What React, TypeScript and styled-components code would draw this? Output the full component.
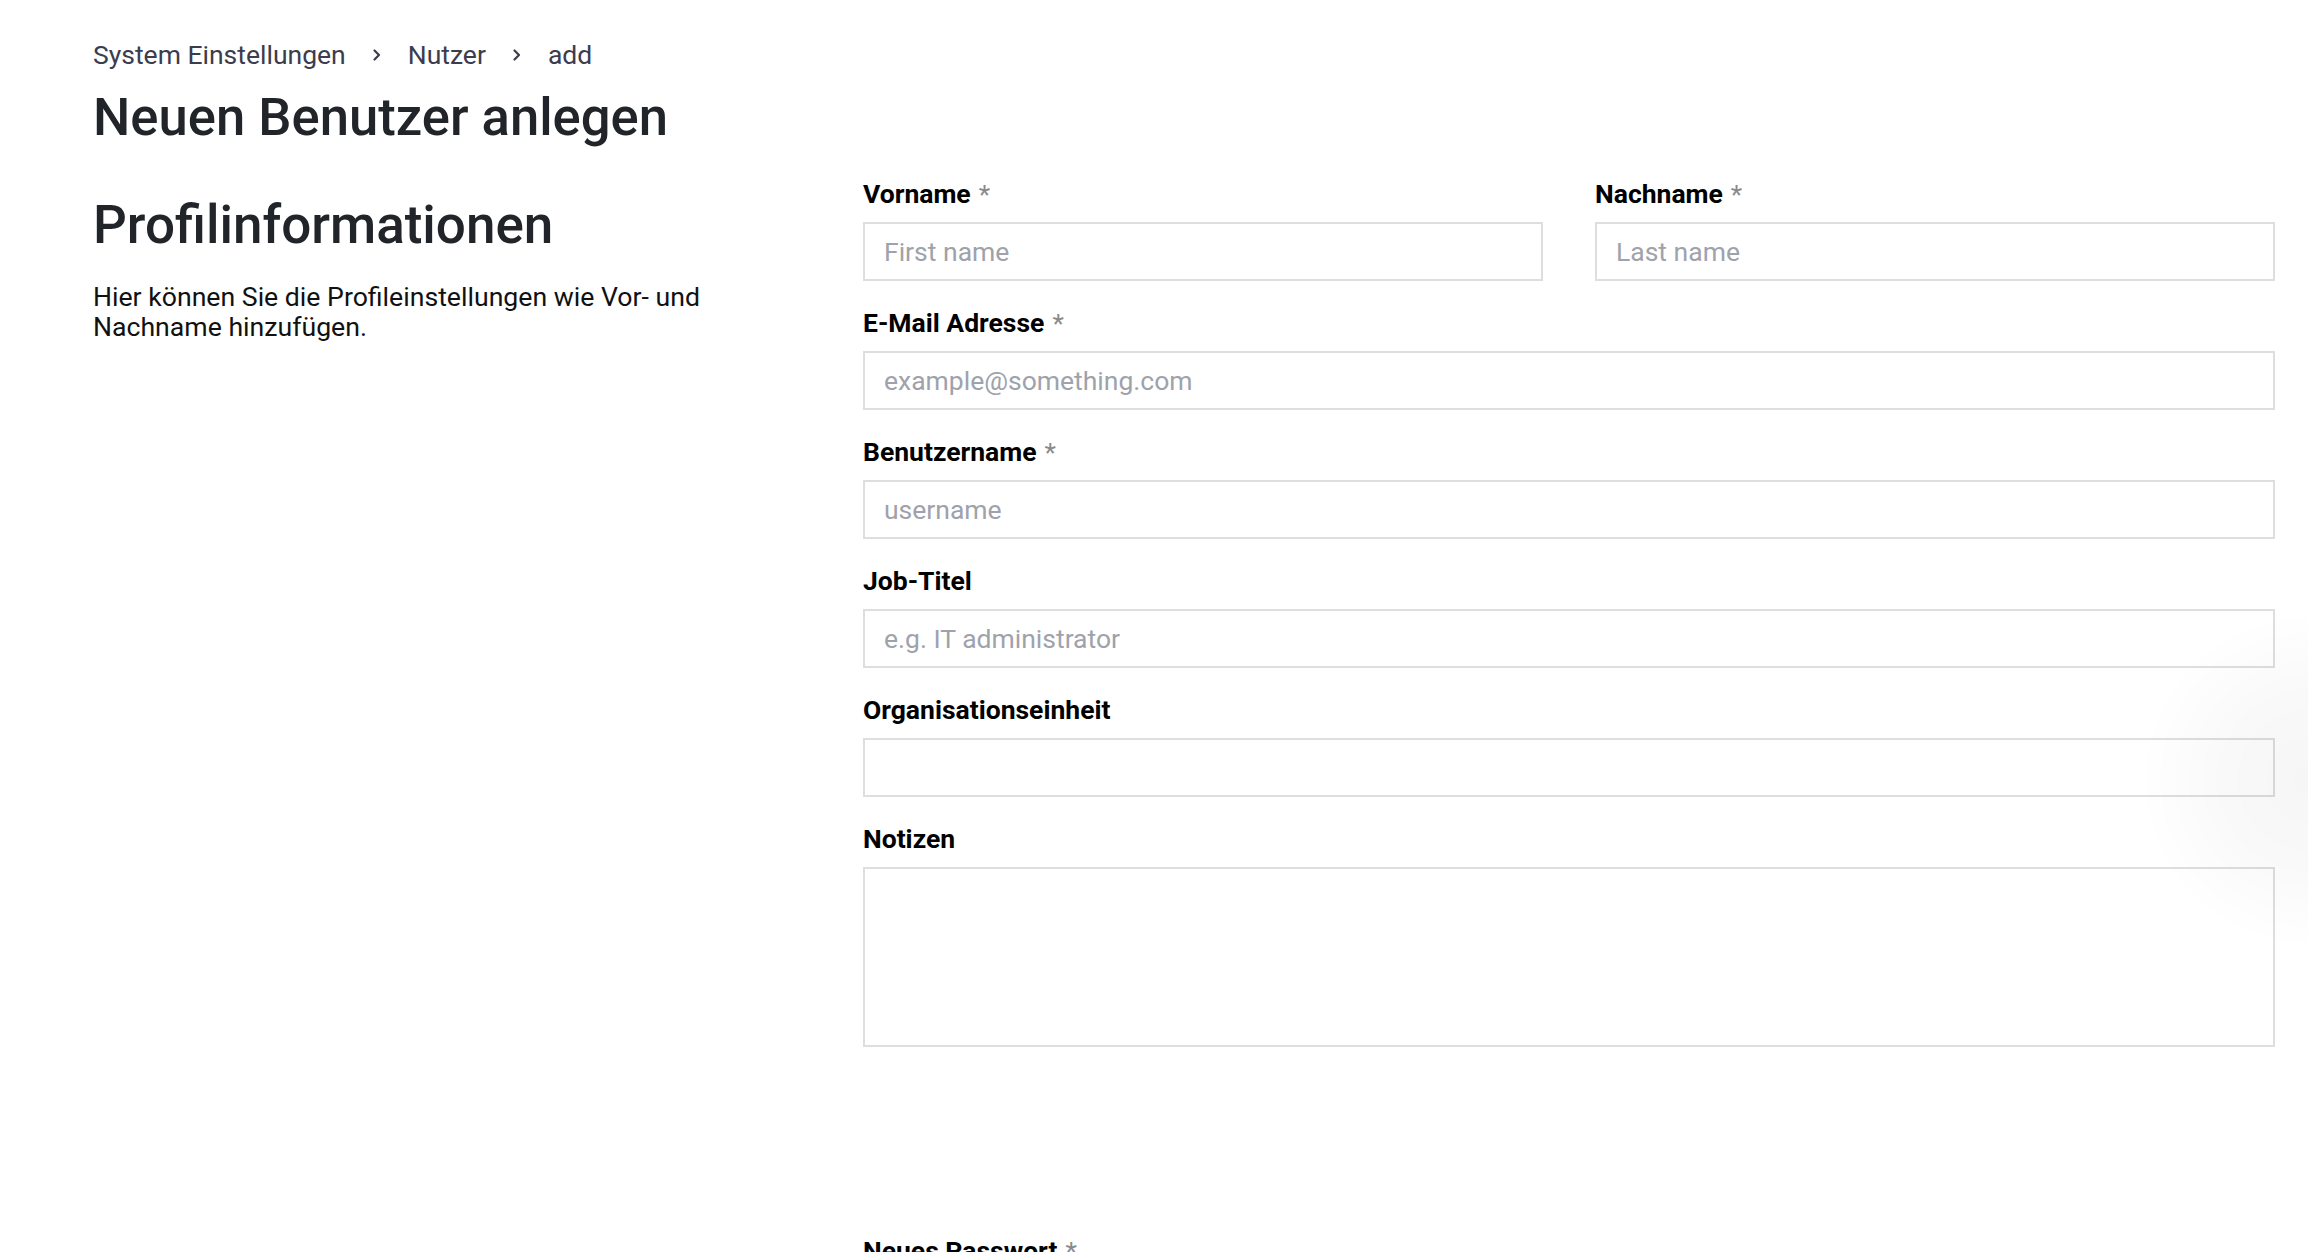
import React from "react";
import styled, { createGlobalStyle } from "styled-components";

const GlobalStyle = createGlobalStyle`
  html, body {
    margin: 0;
    padding: 0;
    background: #ffffff;
    font-family: Roboto, "Liberation Sans", Arial, sans-serif;
    overflow: hidden;
  }
  * { box-sizing: border-box; }
`;

const Page = styled.main`
  padding: 39px 33px 0 93px;
  min-height: 1252px;
  color: #212529;
`;

const Breadcrumb = styled.nav`
  display: flex;
  align-items: center;
  gap: 25px;
  font-size: 26.5px;
  line-height: 32px;
  color: #3b3c4e;
`;

const Crumb = styled.span`
  white-space: nowrap;
`;

const Chevron = styled.svg`
  width: 12px;
  height: 14px;
  flex: none;
`;

const Title = styled.h1`
  margin: 15px 0 0;
  font-size: 52.6px;
  line-height: 62px;
  font-weight: 500;
  color: #212529;
`;

const Section = styled.section<{ $top: number }>`
  display: grid;
  grid-template-columns: 700px 1fr;
  column-gap: 70px;
  margin-top: ${(p) => p.$top}px;
`;

const Intro = styled.div`
  padding-top: 16px;
`;

const SectionTitle = styled.h2`
  margin: 0;
  font-size: 53px;
  line-height: 62px;
  font-weight: 500;
  color: #212529;
`;

const Description = styled.p`
  margin: 26px 0 0;
  font-size: 26.65px;
  line-height: 30px;
  color: #111111;
  max-width: 660px;
`;

const Fields = styled.div`
  display: grid;
  grid-template-columns: 1fr 1fr;
  column-gap: 52px;
  row-gap: 26px;
`;

const Field = styled.div<{ $span?: boolean }>`
  display: flex;
  flex-direction: column;
  grid-column: ${(p) => (p.$span ? "1 / -1" : "auto")};
`;

const Label = styled.label`
  font-size: 26.5px;
  line-height: 32px;
  font-weight: 700;
  color: #000000;
  margin-bottom: 12px;
`;

const Required = styled.span`
  color: #8a8a8a;
  font-weight: 400;
  margin-left: 8px;
`;

const Input = styled.input`
  height: 59px;
  width: 100%;
  border: 2px solid #dedede;
  border-radius: 0;
  padding: 0 19px;
  font-family: Roboto, "Liberation Sans", Arial, sans-serif;
  font-size: 26.5px;
  color: #212529;
  background: #ffffff;
  outline: none;
  &::placeholder {
    color: #9ea2ab;
  }
`;

const TextArea = styled.textarea`
  height: 180px;
  width: 100%;
  border: 2px solid #dedede;
  border-radius: 0;
  padding: 14px 19px;
  font-family: Roboto, "Liberation Sans", Arial, sans-serif;
  font-size: 26.5px;
  resize: none;
  outline: none;
  background: #ffffff;
`;

const FloatingGlow = styled.div`
  position: fixed;
  right: -170px;
  top: 610px;
  width: 340px;
  height: 340px;
  border-radius: 50%;
  background: radial-gradient(circle at center, rgba(0, 0, 0, 0.035) 0%, rgba(0, 0, 0, 0.022) 35%, rgba(0, 0, 0, 0) 70%);
  pointer-events: none;
`;

const ChevronIcon = () => (
  <Chevron viewBox="0 0 12 14" fill="none">
    <path d="M3.5 2.5 L8 7 L3.5 11.5" stroke="#3b3c4e" strokeWidth="2.2" strokeLinecap="round" strokeLinejoin="round" />
  </Chevron>
);

type FieldDef = {
  label: string;
  placeholder?: string;
  required?: boolean;
  span?: boolean;
  type?: string;
};

const fields: FieldDef[] = [
  { label: "Vorname", placeholder: "First name", required: true },
  { label: "Nachname", placeholder: "Last name", required: true },
  { label: "E-Mail Adresse", placeholder: "example@something.com", required: true, span: true, type: "email" },
  { label: "Benutzername", placeholder: "username", required: true, span: true },
  { label: "Job-Titel", placeholder: "e.g. IT administrator", span: true },
  { label: "Organisationseinheit", span: true },
];

export default function App() {
  return (
    <>
      <GlobalStyle />
      <Page>
        <Breadcrumb>
          <Crumb>System Einstellungen</Crumb>
          <ChevronIcon />
          <Crumb>Nutzer</Crumb>
          <ChevronIcon />
          <Crumb>add</Crumb>
        </Breadcrumb>
        <Title>Neuen Benutzer anlegen</Title>

        <Section $top={30}>
          <Intro>
            <SectionTitle>Profilinformationen</SectionTitle>
            <Description>
              Hier können Sie die Profileinstellungen wie Vor- und Nachname hinzufügen.
            </Description>
          </Intro>
          <Fields>
            {fields.map((f) => (
              <Field key={f.label} $span={f.span}>
                <Label>
                  {f.label}
                  {f.required && <Required>*</Required>}
                </Label>
                <Input type={f.type ?? "text"} placeholder={f.placeholder} />
              </Field>
            ))}
            <Field $span>
              <Label>Notizen</Label>
              <TextArea />
            </Field>
          </Fields>
        </Section>

        <Section $top={188}>
          <div />
          <Fields>
            <Field $span>
              <Label>
                Neues Passwort
                <Required>*</Required>
              </Label>
              <Input type="password" />
            </Field>
          </Fields>
        </Section>
      </Page>
      <FloatingGlow />
    </>
  );
}
